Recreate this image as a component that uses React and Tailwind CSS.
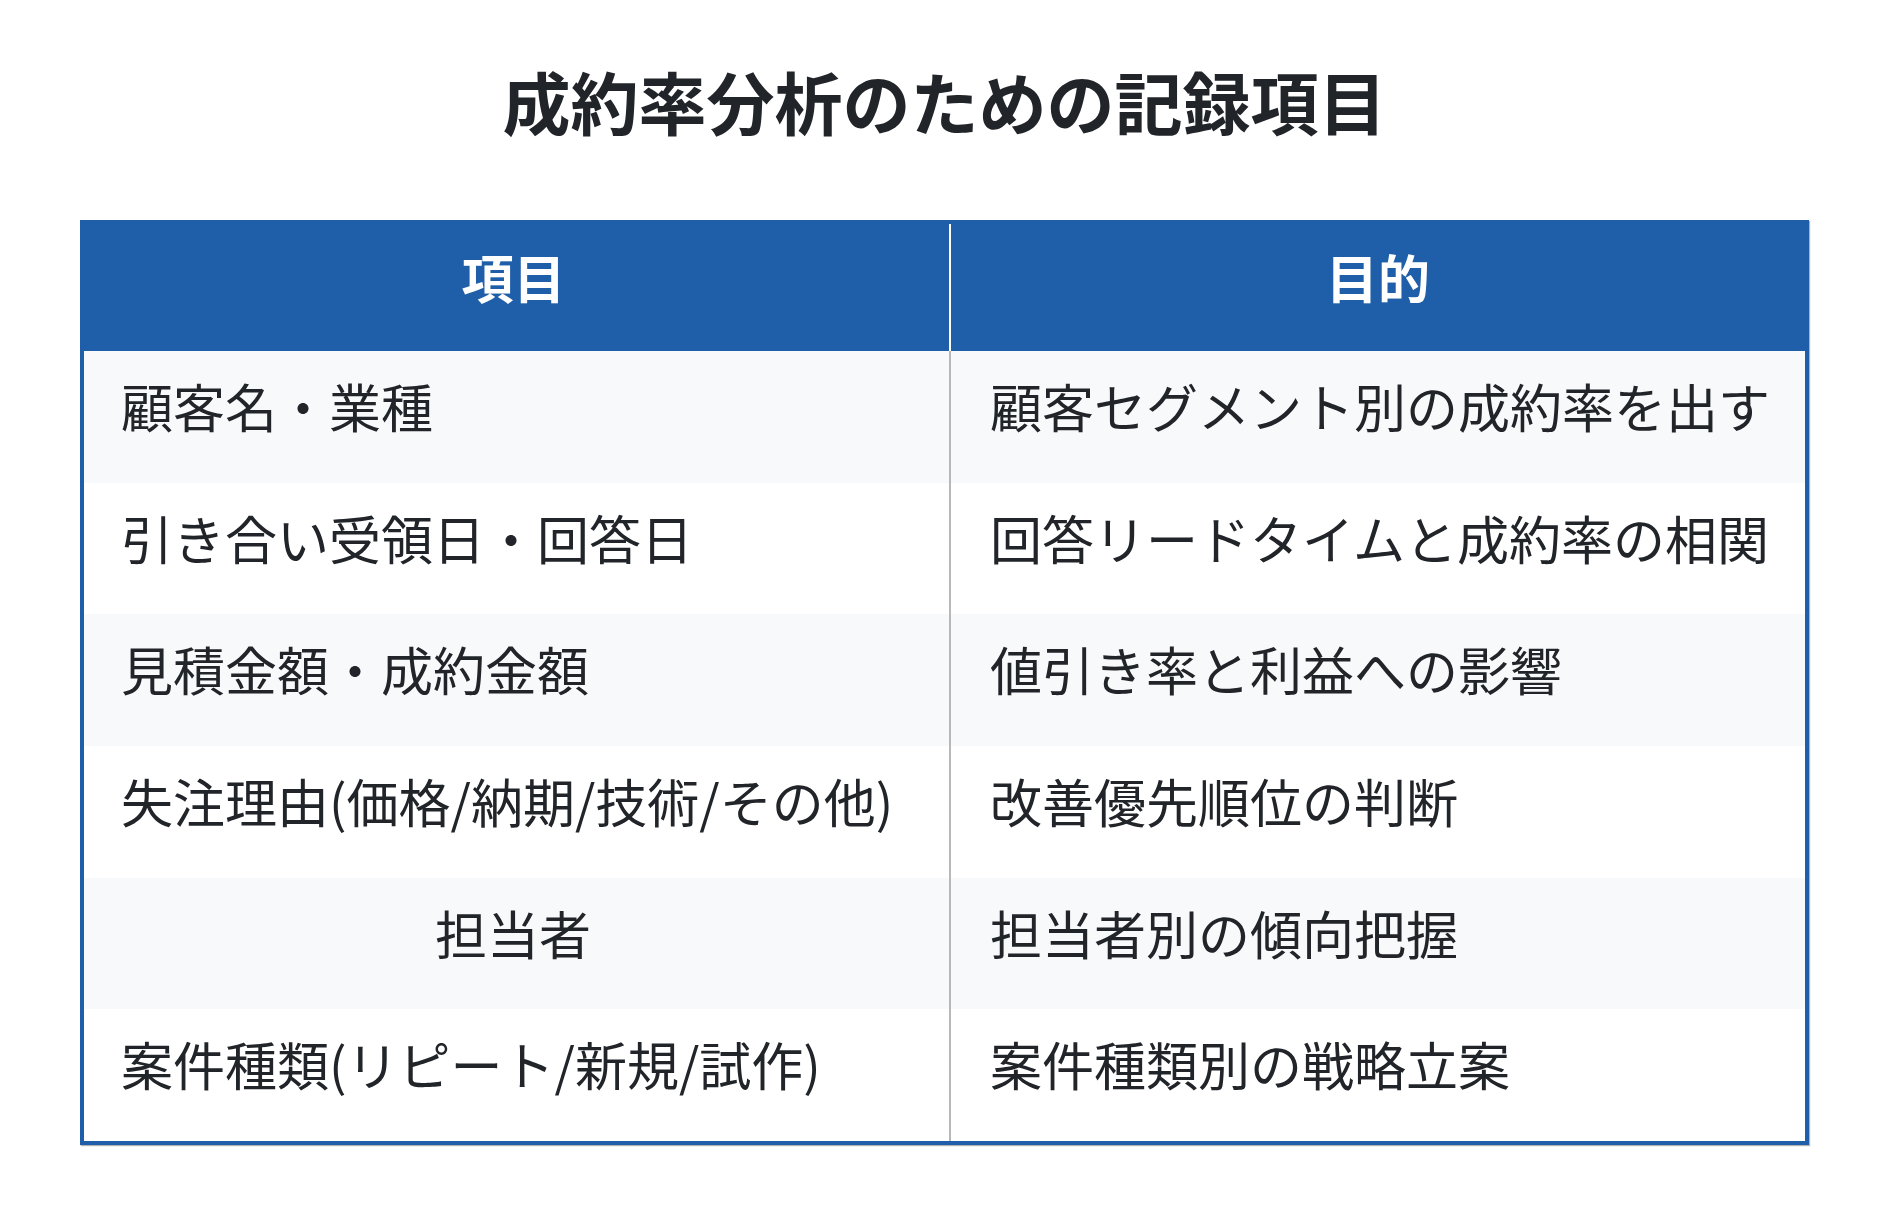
const rows = [
  { item: '顧客名・業種', purpose: '顧客セグメント別の成約率を出す' },
  { item: '引き合い受領日・回答日', purpose: '回答リードタイムと成約率の相関' },
  { item: '見積金額・成約金額', purpose: '値引き率と利益への影響' },
  { item: '失注理由(価格/納期/技術/その他)', purpose: '改善優先順位の判断' },
  { item: '担当者', purpose: '担当者別の傾向把握', center: true },
  { item: '案件種類(リピート/新規/試作)', purpose: '案件種類別の戦略立案' },
];

const App = () => {
  return (
    <div
      className="min-h-[1224px] bg-white px-20 pt-[60px] text-[#212529]"
      style={{ fontFamily: '"Noto Sans CJK JP", "Noto Sans", sans-serif' }}
    >
      <h1 className="text-center text-[68px] font-bold leading-[1.2] mb-[78px]">
        成約率分析のための記録項目
      </h1>

      <table className="w-full table-fixed border-separate border-spacing-0 border-4 border-[#1f5ea8] shadow-[1px_1px_1px_rgba(0,0,0,0.3)]">
        <colgroup>
          <col className="w-[867px]" />
          <col />
        </colgroup>
        <thead>
          <tr className="bg-[#1f5ea8] text-white">
            <th className="border-r-2 border-white pt-[19px] pb-[41px] pl-[35px] pr-[41px] text-center text-[52px] font-bold leading-[1.3]">
              項目
            </th>
            <th className="pt-[19px] pb-[41px] px-[37px] text-center text-[52px] font-bold leading-[1.3]">
              目的
            </th>
          </tr>
        </thead>
        <tbody>
          {rows.map((row, i) => (
            <tr key={i} className={i % 2 === 0 ? 'bg-[#f8f9fa]' : 'bg-white'}>
              <td
                className={
                  'border-r-2 border-[#b8b8b8] pt-[21px] pb-[43px] pl-[37px] pr-[44px] text-[52px] leading-[1.3] whitespace-nowrap ' +
                  (row.center ? 'text-center' : 'text-left')
                }
              >
                {row.item}
              </td>
              <td className="pt-[21px] pb-[43px] pl-[39px] pr-[20px] text-left text-[52px] leading-[1.3] whitespace-nowrap">
                {row.purpose}
              </td>
            </tr>
          ))}
        </tbody>
      </table>
    </div>
  );
};

export default App;
